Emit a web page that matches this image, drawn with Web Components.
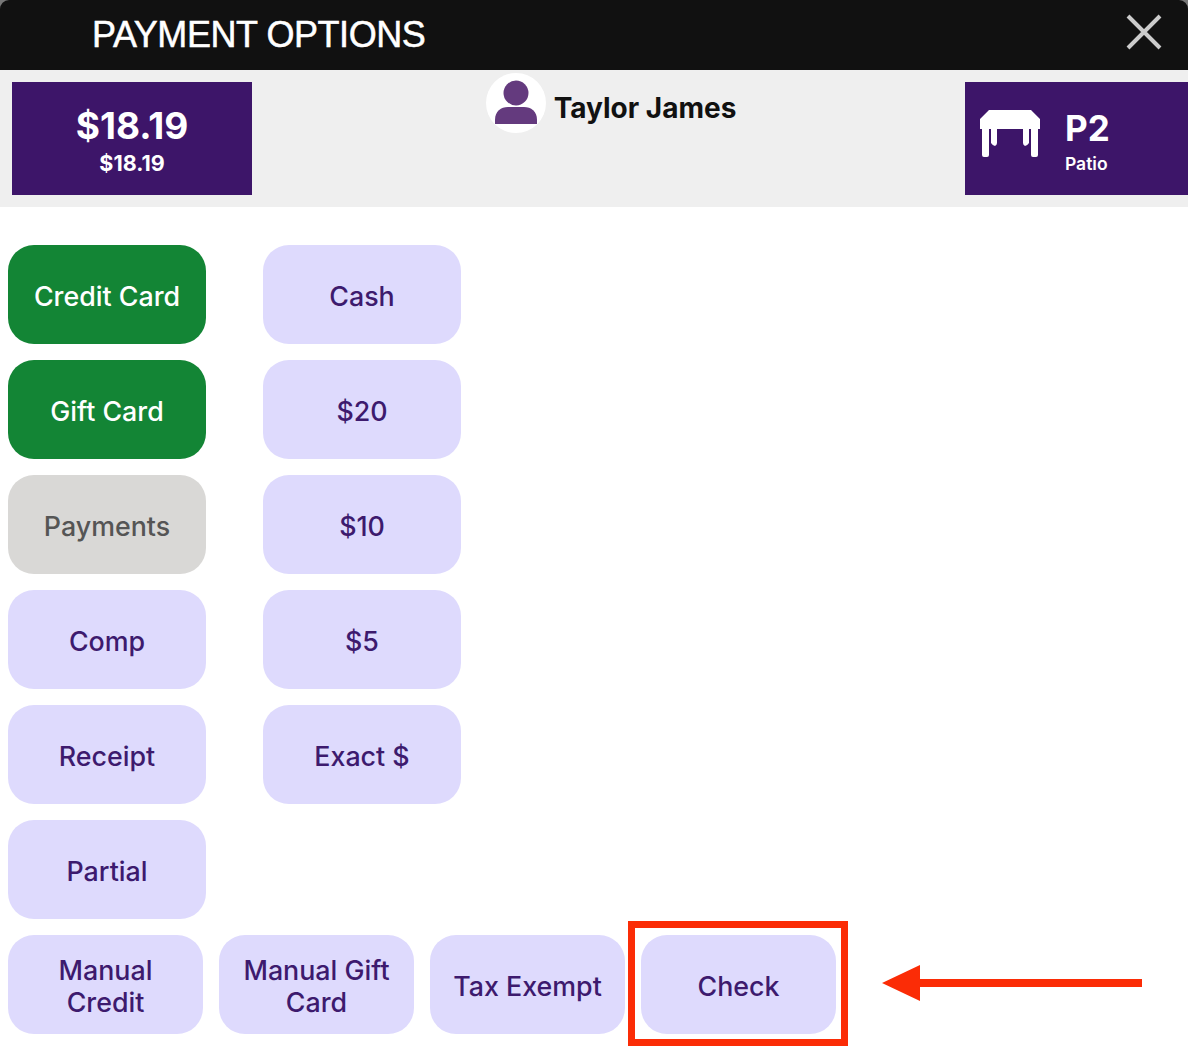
<!doctype html><html><head><style>
html,body{margin:0;padding:0;background:#fff}
body{width:1188px;height:1056px;overflow:hidden;font-family:"Inter",sans-serif}
</style></head><body>
<pay-screen></pay-screen>
<script>
class PayBtn extends HTMLElement{constructor(){super();this.attachShadow({mode:'open'}).innerHTML=`<style>
:host{display:flex;align-items:center;justify-content:center;text-align:center;width:var(--w,198px);height:99px;border-radius:26px;background:#dedafd;color:#3d1a6e;font:500 26.8px/32px "Inter",sans-serif;box-sizing:border-box;padding:2px 8px 0}
:host([v=green]){background:#138535;color:#fff}
:host([v=grey]){background:#d9d8d6;color:#555}
</style><slot></slot>`}}
customElements.define('pay-btn',PayBtn);
class PayScreen extends HTMLElement{constructor(){super();this.attachShadow({mode:'open'}).innerHTML=`<style>
:host{display:block;width:1188px;height:1056px;position:relative;background:#fff}
.top{height:70px;background:#111;color:#fff;display:flex;align-items:center;justify-content:space-between;padding:0 26px 0 92px;font:400 36px "Liberation Sans",sans-serif;letter-spacing:-.45px;-webkit-text-stroke:.5px #fff;border-radius:9px 9px 0 0;box-sizing:border-box}
.top svg{margin-bottom:6px}
.cap{background:#777}
.sub{height:137px;background:#efefef;display:flex;justify-content:space-between;padding:12px 0 12px 12px;box-sizing:border-box}
.box{background:#3d1569;color:#fff;height:113px;display:flex}
.amt{width:240px;flex-direction:column;align-items:center;justify-content:center;font:700 37px/44px "Inter";padding-top:5px;box-sizing:border-box}
.amt small{font:700 21.5px/31px "Inter"}
.who{display:flex;align-items:flex-start;gap:8px;font:700 28px/70px "Inter";color:#111;margin-top:-9px;margin-left:5px}
.who svg{flex:none}
.tbl{width:223px;align-items:center;gap:25px;padding-left:15px;box-sizing:border-box}
.tbl svg{margin-bottom:10px}
.tbl b{display:block;font:700 35px/40px "Inter";margin-top:11px}.tbl span{font:600 17.5px/32px "Inter"}
.grid{display:grid;grid-template-columns:198px 198px;column-gap:57px;row-gap:16px;padding:38px 0 0 8px}
.row{display:flex;gap:16px;padding:16px 0 0 8px;--w:195px}
.red{position:absolute;left:628px;top:921px;width:220px;height:125px;box-sizing:border-box;border:7px solid #fb2c06}
svg.arrow{position:absolute;left:880px;top:963px}
</style>
<div class="cap"><div class="top"><span>PAYMENT OPTIONS</span><svg width="36" height="36" viewBox="0 0 36 36"><path d="M2 2L34 34M34 2L2 34" stroke="#ccc" stroke-width="4"/></svg></div></div>
<div class="sub"><div class="box amt">$18.19<small>$18.19</small></div>
<div class="who"><svg width="60" height="60" viewBox="0 0 60 60"><circle cx="30" cy="30" r="30" fill="#fff"/><circle cx="30" cy="20" r="12.5" fill="#643a7e"/><path d="M9 51v-4c0-9 6-13 13-13h16c7 0 13 4 13 13v4z" fill="#643a7e"/></svg><span>Taylor James</span></div>
<div class="box tbl"><svg width="60" height="47" viewBox="0 0 60 47"><path d="M9 0H51L60 9V19H58V45Q58 47 56 47H53Q51 47 51 45V19H49V33Q47 36 45 36Q43 35 43 33V19H17V33Q17 35 15 36Q13 36 11 33V19H9V45Q9 47 7 47H4Q2 47 2 45V19H0V9z" fill="#fff"/></svg><div><b>P2</b><span>Patio</span></div></div></div>
<div class="grid">
<pay-btn v="green">Credit Card</pay-btn><pay-btn>Cash</pay-btn>
<pay-btn v="green">Gift Card</pay-btn><pay-btn>$20</pay-btn>
<pay-btn v="grey">Payments</pay-btn><pay-btn>$10</pay-btn>
<pay-btn>Comp</pay-btn><pay-btn>$5</pay-btn>
<pay-btn>Receipt</pay-btn><pay-btn>Exact $</pay-btn>
<pay-btn>Partial</pay-btn>
</div>
<div class="row"><pay-btn>Manual<br>Credit</pay-btn><pay-btn>Manual Gift<br>Card</pay-btn><pay-btn>Tax Exempt</pay-btn><pay-btn>Check</pay-btn></div>
<div class="red"></div>
<svg class="arrow" width="265" height="40" viewBox="0 0 265 40"><path d="M2 20L40 2V16H262V24H40V38z" fill="#fb2c06"/></svg>`}}
customElements.define('pay-screen',PayScreen);
</script></body></html>
